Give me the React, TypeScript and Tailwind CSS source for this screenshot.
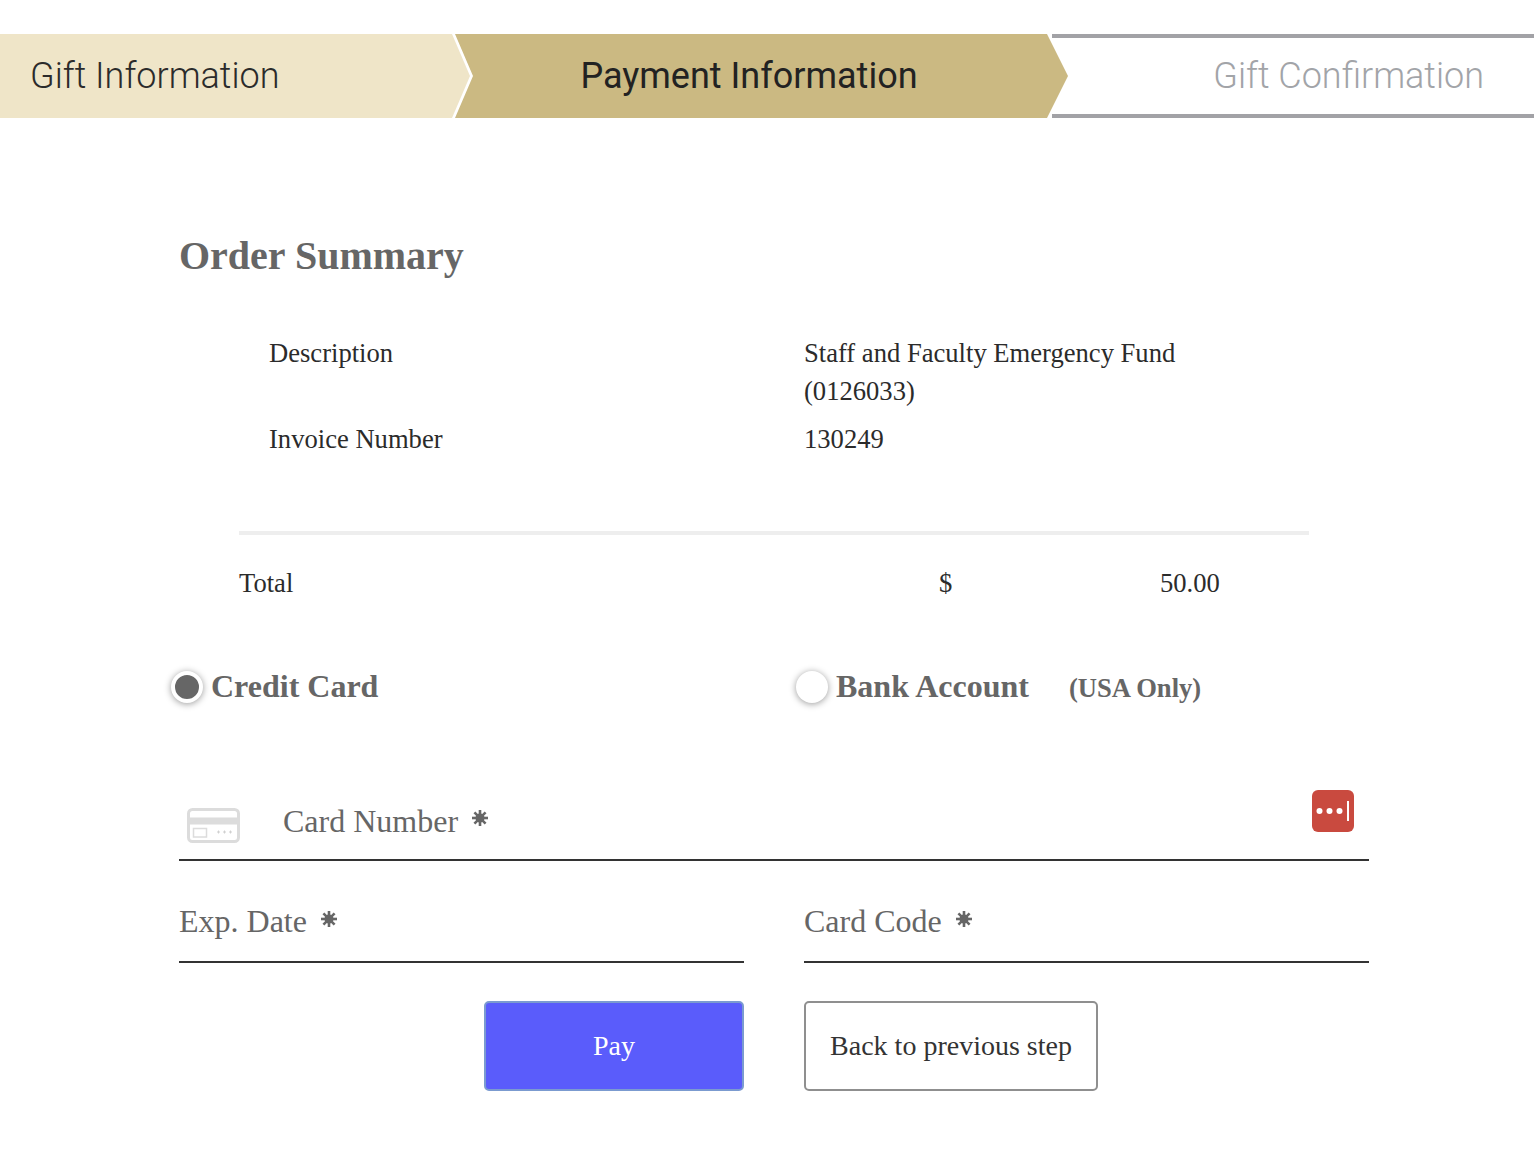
function Req({ className = "" }: { className?: string }) {
  return (
    <svg width="18" height="18" viewBox="0 0 18 18" className={`shrink-0 text-[#666] ${className}`}>
      <circle cx="9" cy="9" r="4.5" fill="currentColor" />
      <g stroke="currentColor" strokeWidth="2.6">
        <line x1="9" y1="1" x2="9" y2="17" />
        <line x1="1" y1="9" x2="17" y2="9" />
        <line x1="3.4" y1="3.4" x2="14.6" y2="14.6" />
        <line x1="14.6" y1="3.4" x2="3.4" y2="14.6" />
      </g>
    </svg>
  );
}

function CardIcon() {
  return (
    <svg width="53" height="35" viewBox="0 0 53 35" fill="none" className="shrink-0">
      <rect x="1.5" y="1.5" width="50" height="32" rx="4" stroke="#dcdcdc" strokeWidth="3" fill="#fff" />
      <rect x="2" y="9.5" width="49" height="7" fill="#dcdcdc" />
      <rect x="6.5" y="20.5" width="13" height="8.5" stroke="#dcdcdc" strokeWidth="1.5" />
      <g stroke="#d0d0d0" strokeWidth="1">
        <path d="M30 24h3M31.5 22.5v3M36 24h3M37.5 22.5v3M42 24h3M43.5 22.5v3" />
      </g>
    </svg>
  );
}

function LastPassIcon() {
  return (
    <svg width="42" height="42" viewBox="0 0 42 42" className="shrink-0">
      <rect width="42" height="42" rx="6" fill="#c94a3f" />
      <circle cx="7.5" cy="21" r="3" fill="#fff" />
      <circle cx="17.5" cy="21" r="3" fill="#fff" />
      <circle cx="27.5" cy="21" r="3" fill="#fff" />
      <rect x="35" y="11" width="2" height="20" fill="#fff" />
    </svg>
  );
}

export default function App() {
  return (
    <div className="bg-white h-[1176px] overflow-hidden font-['Liberation_Serif',serif] text-[#2b2b2b]">
      {/* Steps */}
      <div className="flex h-[84px] mt-[34px] font-['Roboto',sans-serif] font-light text-[36px] leading-[84px]">
        <div className="w-[471px] shrink-0 bg-[#efe5c8] pl-[30px] [clip-path:polygon(0_0,452px_0,470px_50%,452px_100%,0_100%)]">
          Gift Information
        </div>
        <div className="w-[613px] shrink-0 -ml-[16px] bg-[#cbb982] text-[#222] text-center font-normal pr-[25px] [clip-path:polygon(0_0,592px_0,613px_50%,592px_100%,0_100%,18px_50%)]">
          Payment Information
        </div>
        <div className="flex-1 -ml-[16px] border-y-4 border-[#a2a2a6] text-[#a2a4a8] text-right pr-[50px] leading-[76px]">
          Gift Confirmation
        </div>
      </div>

      <div className="w-[1190px] ml-[179px]">
        <h2 className="mt-[113px] text-[40px] leading-[50px] font-bold text-[#666]">Order Summary</h2>

        {/* Summary */}
        <div className="mt-[53px] pl-[90px] text-[26.6px] leading-[38px] grid grid-cols-[535px_390px] gap-y-[10px]">
          <div>Description</div>
          <div>Staff and Faculty Emergency Fund (0126033)</div>
          <div>Invoice Number</div>
          <div>130249</div>
        </div>

        <div className="ml-[60px] w-[1070px] h-[4px] bg-[#eeeeee] mt-[73px]" />

        <div className="ml-[60px] mt-[29px] flex text-[26.6px] leading-[38px]">
          <div className="w-[700px]">Total</div>
          <div className="w-[221px]">$</div>
          <div>50.00</div>
        </div>

        {/* Payment type */}
        <div className="mt-[64px] grid grid-cols-[625px_1fr] text-[#666] font-bold">
          <div className="flex items-center -ml-[8px]">
            <span className="w-[32px] h-[32px] mt-[2px] rounded-full bg-[#666] border-[4px] border-white shadow-[0_1px_7px_rgba(0,0,0,0.4)] shrink-0" />
            <span className="ml-[8px] text-[32px] leading-[40px]">Credit Card</span>
          </div>
          <div className="flex items-center -ml-[8px]">
            <span className="w-[32px] h-[32px] mt-[2px] rounded-full bg-white shadow-[0_1px_7px_rgba(0,0,0,0.4)] shrink-0" />
            <span className="ml-[8px] text-[32px] leading-[40px]">Bank Account</span>
            <span className="ml-[40px] text-[26.6px] leading-[32px] mt-[4px]">(USA Only)</span>
          </div>
        </div>

        {/* Fields */}
        <div className="mt-[78px] h-[77px] border-b-2 border-[#333] flex items-start relative">
          <div className="ml-[8px] mt-[24px]"><CardIcon /></div>
          <span className="ml-[43px] mt-[17px] text-[32px] leading-[40px] text-[#666]">Card Number</span>
          <Req className="ml-[13px] mt-[25px]" />
          <div className="absolute right-[15px] top-[6px]"><LastPassIcon /></div>
        </div>

        <div className="mt-[23px] grid grid-cols-2 gap-x-[60px]">
          <div className="h-[79px] border-b-2 border-[#333] flex items-start text-[#666]">
            <span className="mt-[17px] text-[32px] leading-[40px]">Exp. Date</span>
            <Req className="ml-[13px] mt-[26px]" />
          </div>
          <div className="h-[79px] border-b-2 border-[#333] flex items-start text-[#666]">
            <span className="mt-[17px] text-[32px] leading-[40px]">Card Code</span>
            <Req className="ml-[13px] mt-[26px]" />
          </div>
        </div>

        {/* Buttons */}
        <div className="mt-[38px] grid grid-cols-2 gap-x-[60px]">
          <div className="flex justify-end">
            <button className="w-[260px] h-[90px] rounded-[5px] border-2 border-[#7b9bd0] bg-[#5a5cfb] text-white text-[28px]">Pay</button>
          </div>
          <div>
            <button className="w-[294px] h-[90px] rounded-[5px] border-2 border-[#8f8f8f] bg-white text-[#333] text-[28px]">Back to previous step</button>
          </div>
        </div>
      </div>
    </div>
  );
}
